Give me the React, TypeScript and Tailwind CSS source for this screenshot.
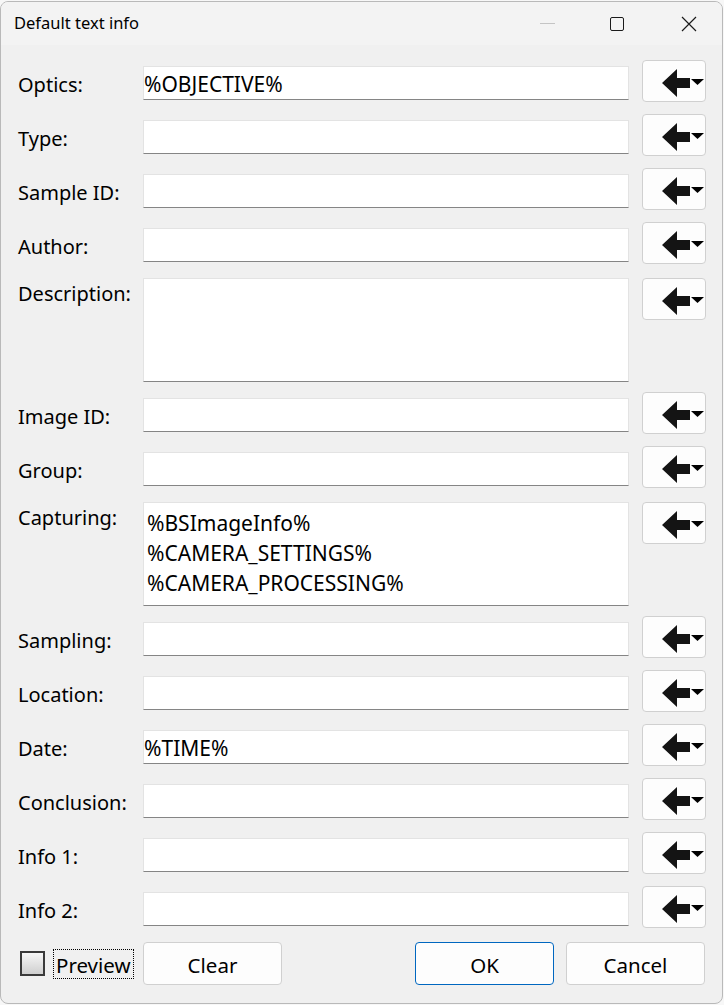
import React from "react";

type Field = { label: string; value?: string[]; multi?: boolean };

const FIELDS: Field[] = [
  { label: "Optics:", value: ["%OBJECTIVE%"] },
  { label: "Type:" },
  { label: "Sample ID:" },
  { label: "Author:" },
  { label: "Description:", multi: true },
  { label: "Image ID:" },
  { label: "Group:" },
  { label: "Capturing:", multi: true, value: ["%BSImageInfo%", "%CAMERA_SETTINGS%", "%CAMERA_PROCESSING%"] },
  { label: "Sampling:" },
  { label: "Location:" },
  { label: "Date:", value: ["%TIME%"] },
  { label: "Conclusion:" },
  { label: "Info 1:" },
  { label: "Info 2:" },
];

function InsertButton() {
  return (
    <button className="w-[64px] h-[42px] shrink-0 rounded-[4px] border border-[#d0d0d0] bg-[#fdfdfd]">
      <svg width="64" height="42" viewBox="0 0 64 42" className="block">
        <polygon points="19,22 34,8 34,17 47,17 47,27 34,27 34,36" fill="#141414" />
        <polygon points="48,18 61,18 54.5,24" fill="#000" />
      </svg>
    </button>
  );
}

function Row({ field }: { field: Field }) {
  if (field.multi) {
    return (
      <div className="flex items-start">
        <div className="w-[125px] shrink-0 pt-[3px] text-[20px] leading-[26px]">{field.label}</div>
        <div className="flex-1 h-[104px] bg-white border border-[#e3e3e3] border-b-[#858585] px-[3px] pt-[5px] text-[21px] leading-[30px]">
          {field.value?.map((line) => (
            <div key={line}>{line}</div>
          ))}
        </div>
        <div className="ml-[13px]">
          <InsertButton />
        </div>
      </div>
    );
  }
  return (
    <div className="flex items-center h-[42px]">
      <div className="w-[125px] shrink-0 pt-[4px] text-[20px] leading-[26px]">{field.label}</div>
      <div className="flex-1 h-[34px] bg-white border border-[#e3e3e3] border-b-[#858585] pl-0 pr-[1px] pt-[4px] flex items-center text-[21px]">
        {field.value?.[0]}
      </div>
      <div className="ml-[13px]">
        <InsertButton />
      </div>
    </div>
  );
}

export default function App() {
  return (
    <div
      className="w-[724px] h-[1005px] bg-[#f7f7f7] pt-px pr-px pb-px text-black"
      style={{ fontFamily: '"Noto Sans", "Open Sans", sans-serif' }}
    >
      <div className="h-full flex flex-col rounded-[8px] border border-[#b9b9b9] overflow-hidden bg-[#f0f0f0]">
        <div className="h-[43px] shrink-0 bg-[#f3f3f3] flex items-center pl-[13px]">
          <span className="text-[16.5px] flex-1">Default text info</span>
          <div className="flex items-center h-full">
            <div className="w-[70px] h-full flex items-center justify-center">
              <div className="w-[15px] h-px bg-[#c4c4c4]" />
            </div>
            <div className="w-[70px] h-full flex items-center justify-center">
              <div className="w-[14px] h-[14px] border border-[#1a1a1a] rounded-[2px]" />
            </div>
            <div className="w-[70px] h-full flex items-center justify-center">
              <svg width="16" height="16" viewBox="0 0 16 16" className="ml-[4px]">
                <path d="M1 1 L15 15 M15 1 L1 15" stroke="#1a1a1a" strokeWidth="1.2" />
              </svg>
            </div>
          </div>
        </div>
        <div className="flex-1 flex flex-col gap-[12px] pt-[17px] pl-[17px] pr-[16px]">
          {FIELDS.map((f) => (
            <Row key={f.label} field={f} />
          ))}
          <div className="flex items-center h-[43px]">
            <div className="w-[125px] shrink-0 flex items-center">
              <div className="ml-[2px] w-[25px] h-[25px] border-2 border-[#3a3a3a] bg-gradient-to-b from-[#f7f7f7] to-[#cfcfcf]" />
              <div className="ml-[8px] border border-dotted border-[#000] px-[2px] pt-[2px] text-[20.5px] leading-[26px] whitespace-nowrap">Preview</div>
            </div>
            <button className="w-[139px] h-[43px] rounded-[4px] border border-[#d0d0d0] bg-[#fdfdfd] pt-[3px] text-[20.5px]">
              Clear
            </button>
            <div className="flex-1" />
            <button className="w-[139px] h-[43px] rounded-[4px] border border-[#0067c0] bg-[#fdfdfd] pt-[3px] text-[20.5px]">
              OK
            </button>
            <button className="ml-[12px] mr-[1px] w-[139px] h-[43px] rounded-[4px] border border-[#d0d0d0] bg-[#fdfdfd] pt-[3px] text-[20.5px]">
              Cancel
            </button>
          </div>
        </div>
      </div>
    </div>
  );
}
